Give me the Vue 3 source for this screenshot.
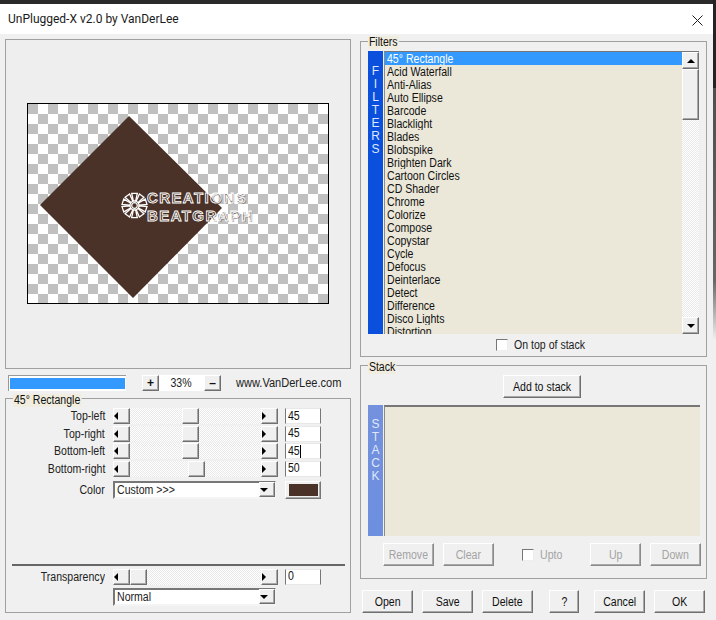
<script setup>
const filters = ['45° Rectangle','Acid Waterfall','Anti-Alias','Auto Ellipse','Barcode','Blacklight','Blades','Blobspike','Brighten Dark','Cartoon Circles','CD Shader','Chrome','Colorize','Compose','Copystar','Cycle','Defocus','Deinterlace','Detect','Difference','Disco Lights','Distortion']
const sliders = [
  { label: 'Top-left', thumb: 52, value: '45' },
  { label: 'Top-right', thumb: 52, value: '45' },
  { label: 'Bottom-left', thumb: 52, value: '45', caret: true },
  { label: 'Bottom-right', thumb: 58, value: '50' }
]
const petals = Array.from({ length: 10 }, (_, i) => i * 36)
</script>

<template>
  <div class="screen">
    <div class="topbar"></div>
    <div class="titlebar">
      <span class="title">UnPlugged-X v2.0 by VanDerLee</span>
      <svg class="close" width="11" height="11" viewBox="0 0 11 11"><path d="M.5.5l10 10M10.5.5l-10 10" stroke="#222" stroke-width="1" fill="none"/></svg>
    </div>
    <div class="body">
      <div class="left">
        <div class="preview">
          <div class="canvas">
            <svg class="shape" width="300" height="199" viewBox="28 104 300 199">
              <polygon points="129,116 222,208 133,298 40,205" fill="#4a3228"/>
            </svg>
            <div class="logo">
              <svg class="flower" width="27" height="27" viewBox="-13.5 -13.5 27 27">
                <g v-for="a in petals" :key="a" :transform="`rotate(${a})`">
                  <path d="M-1.2-4.5L-2.8-12.2L2.8-12.2L1.2-4.5Z" fill="none" stroke="#fff" stroke-width="1.3"/>
                </g>
                <circle r="2.8" fill="none" stroke="#fff" stroke-width="1.2"/>
              </svg>
              <div class="logo-text">
                <div class="logo-line">CREATIONS</div>
                <div class="logo-line">BEATGRAPH</div>
              </div>
            </div>
          </div>
        </div>
        <div class="zoom-row">
          <div class="progress"><div class="progress-fill"></div></div>
          <button class="btn zoom-btn">+</button>
          <span class="zoom-val"><span class="n">33%</span></span>
          <button class="btn zoom-btn">–</button>
          <span class="url">www.VanDerLee.com</span>
        </div>
        <div class="group params">
          <span class="legend">45° Rectangle</span>
          <div class="slider-rows">
            <div v-for="s in sliders" :key="s.label" class="row">
              <label class="row-label"><span class="n nr">{{ s.label }}</span></label>
              <div class="hscroll">
                <button class="btn arrow"><i class="tri tri-l"></i></button>
                <div class="track"><div class="btn thumb" :style="{ marginLeft: s.thumb + 'px' }"></div></div>
                <button class="btn arrow"><i class="tri tri-r"></i></button>
              </div>
              <div class="input"><span class="n nl">{{ s.value }}</span><i v-if="s.caret" class="caret"></i></div>
            </div>
          </div>
          <div class="row color-row">
            <label class="row-label"><span class="n nr">Color</span></label>
            <div class="select"><span class="n nl">Custom &gt;&gt;&gt;</span><button class="btn drop"><i class="tri tri-d"></i></button></div>
            <div class="swatch"><div class="swatch-fill"></div></div>
          </div>
          <div class="rule"></div>
          <div class="row trans-row">
            <label class="row-label"><span class="n nr">Transparency</span></label>
            <div class="hscroll">
              <button class="btn arrow"><i class="tri tri-l"></i></button>
              <div class="track"><div class="btn thumb"></div></div>
              <button class="btn arrow"><i class="tri tri-r"></i></button>
            </div>
            <div class="input"><span class="n nl">0</span></div>
          </div>
          <div class="row normal-row">
            <span class="row-label"></span>
            <div class="select"><span class="n nl">Normal</span><button class="btn drop"><i class="tri tri-d"></i></button></div>
          </div>
        </div>
      </div>

      <div class="right">
        <div class="group filters">
          <span class="legend legend-f">Filters</span>
          <div class="listwrap">
            <div class="side side-filters"><span v-for="c in 'FILTERS'" :key="c + 'f'">{{ c }}</span></div>
            <div class="list">
              <div v-for="(f, i) in filters" :key="f" class="item" :class="{ sel: i === 0 }"><span class="n nl">{{ f }}</span></div>
            </div>
            <div class="vscroll">
              <button class="btn vbtn"><i class="tri tri-u"></i></button>
              <div class="btn vthumb"></div>
              <div class="vtrack"></div>
              <button class="btn vbtn"><i class="tri tri-d"></i></button>
            </div>
          </div>
          <div class="ontop"><i class="check"></i><span class="n nl">On top of stack</span></div>
        </div>
        <div class="group stack">
          <span class="legend">Stack</span>
          <div class="add-row"><button class="btn add"><span class="n">Add to stack</span></button></div>
          <div class="stack-box">
            <div class="side side-stack"><span v-for="c in 'STACK'" :key="c + 's'">{{ c }}</span></div>
            <div class="stack-list"></div>
          </div>
          <div class="stack-actions">
            <button class="btn act off"><span class="n">Remove</span></button>
            <button class="btn act off gap"><span class="n">Clear</span></button>
            <div class="upto"><i class="check"></i><span class="n nl">Upto</span></div>
            <button class="btn act off"><span class="n">Up</span></button>
            <button class="btn act off gap"><span class="n">Down</span></button>
          </div>
        </div>
        <div class="footer">
          <button class="btn foot"><span class="n">Open</span></button>
          <button class="btn foot"><span class="n">Save</span></button>
          <button class="btn foot"><span class="n">Delete</span></button>
          <button class="btn foot help"><span class="n">?</span></button>
          <button class="btn foot"><span class="n">Cancel</span></button>
          <button class="btn foot"><span class="n">OK</span></button>
        </div>
      </div>
    </div>
    <div class="edge"></div>
  </div>
</template>

<style scoped>
.screen {
  position: relative;
  width: 716px;
  height: 620px;
  overflow: hidden;
  background: #f0f0f0;
  font-family: "Liberation Sans", Arial, sans-serif;
  font-size: 12px;
  color: #111;
  box-sizing: border-box;
}
.n { display: inline-block; transform: scaleX(0.88); white-space: nowrap; }
.nl { transform-origin: left center; }
.nr { transform-origin: right center; }
.topbar { height: 4px; background: #2a2a2a; }
.titlebar {
  height: 30px;
  background: #fff;
  display: flex;
  align-items: center;
  justify-content: space-between;
  padding: 0 13px 0 8px;
}
.title { font-family: Roboto, sans-serif; font-size: 12px; color: #1a1a1a; }
.close { margin-top: 2px; }
.edge {
  position: absolute;
  right: 0;
  top: 0;
  width: 3px;
  height: 340px;
  background: linear-gradient(#242424 0 88px, #4f4f4f 88px, #666 280px, #f0f0f0 340px);
}
.body { display: flex; padding: 5px 0 0 5px; gap: 9px; }
.left { width: 346px; }
.right { width: 347px; padding-top: 2px; }

.preview {
  width: 346px;
  height: 330px;
  box-sizing: border-box;
  border: 1px solid #a0a0a0;
  background: #eee;
  padding: 63px 0 0 21px;
}
.canvas {
  position: relative;
  width: 302px;
  height: 201px;
  box-sizing: border-box;
  border: 1px solid #000;
  background: repeating-conic-gradient(#c0c0c0 0 25%, #fff 0 50%) 10px 0 / 20px 20px;
}
.shape { display: block; }
.logo { position: absolute; left: 93px; top: 85px; display: flex; align-items: center; }
.flower { display: block; margin-top: -3px; }
.logo-text {
  margin-left: -1px;
  font-size: 15px;
  letter-spacing: 1.4px;
  font-weight: 700;
  color: transparent;
  -webkit-text-stroke: 0.9px #fff;
  text-shadow: 1px 1px 0 rgba(60, 40, 30, 0.55);
  white-space: nowrap;
}
.logo-line { height: 17.5px; line-height: 17.5px; }
.zoom-row { display: flex; align-items: center; height: 16px; margin: 6px 0 0 3px; }
.progress { width: 118px; height: 16px; box-sizing: border-box; background: #fff; padding: 2px 1px; border-left: 1px solid #999; border-top: 1px solid #999; }
.progress-fill { height: 100%; background: #3399ff; }
.zoom-btn { width: 17px; height: 16px; font-size: 13px; font-weight: 700; line-height: 13px; }
.progress + .zoom-btn { margin-left: 16px; }
.zoom-val { width: 45px; height: 16px; line-height: 16px; background: #fff; text-align: center; color: #222; }
.url { margin-left: 15px; color: #222; white-space: nowrap; display: inline-block; transform: scaleX(0.92); transform-origin: left center; }

.group { position: relative; border: 1px solid #a0a0a0; box-sizing: border-box; }
.legend {
  position: absolute;
  left: 7px;
  top: -5px;
  height: 13px;
  line-height: 13px;
  background: #f1eee0;
  padding: 0 1px;
  transform: scaleX(0.88);
  transform-origin: left center;
}
.legend-f { top: -6px; }
.params { width: 346px; height: 215px; margin-top: 7px; padding-top: 9px; }
.row { display: flex; align-items: center; }
.row-label { width: 99px; text-align: right; margin-right: 8px; color: #222; }
.slider-rows { display: flex; flex-direction: column; gap: 1.5px; }
.slider-rows .row { height: 16px; }
.hscroll { display: flex; width: 165px; height: 16px; }
.arrow { width: 17px; height: 16px; display: flex; align-items: center; justify-content: center; flex: none; }
.track { flex: 1; background: repeating-conic-gradient(#e9e9e9 0 25%, #fff 0 50%) 0 0 / 2px 2px; }
.thumb { width: 17px; height: 16px; }
.input {
  width: 36px;
  height: 16px;
  margin-left: 7px;
  line-height: 15px;
  box-sizing: border-box;
  background: #fff;
  border: 1px solid;
  border-color: #e8e8e8 #777 #e8e8e8 #777;
  padding-left: 2px;
  display: flex;
  align-items: center;
}
.caret { width: 1px; height: 13px; background: #000; margin-left: -1px; }
.color-row { margin-top: 4px; }
.select {
  display: flex;
  justify-content: space-between;
  align-items: center;
  width: 163px;
  height: 18px;
  box-sizing: border-box;
  background: #fff;
  border: 2px solid;
  border-color: #777 #f4f4f4 #f4f4f4 #777;
  padding-left: 2px;
}
.select > span { color: #222; }
.drop { width: 16px; height: 15px; display: flex; align-items: center; justify-content: center; margin-right: -1px; }
.swatch {
  width: 36px;
  height: 18px;
  margin-left: 9px;
  box-sizing: border-box;
  padding: 2px 2px 2px 3px;
  border: 1px solid;
  border-color: #fff #777 #777 #fff;
  box-shadow: inset -1px -1px 0 #aaa;
}
.swatch-fill { height: 100%; background: #4a3228; }
.rule { height: 2px; background: #666; margin: 65px 0 0 6px; width: 333px; }
.trans-row { margin-top: 3px; }
.normal-row { margin-top: 3px; }

.btn {
  display: block;
  box-sizing: border-box;
  border: 1px solid;
  border-color: #fff #6f6f6f #6f6f6f #fff;
  box-shadow: inset -1px -1px 0 #a8a8a8;
  background: #f0f0f0;
  font-family: "Liberation Sans", Arial, sans-serif;
  font-size: 12px;
  color: #111;
  padding: 0;
}
.tri { display: block; width: 0; height: 0; border-style: solid; border-color: transparent; }
.tri-l { border-width: 4px 4px 4px 0; border-right-color: #000; }
.tri-r { border-width: 4px 0 4px 4px; border-left-color: #000; }
.tri-u { border-width: 0 4px 4px 4px; border-bottom-color: #000; }
.tri-d { border-width: 4px 4px 0 4px; border-top-color: #000; }

.filters { width: 347px; height: 316px; padding: 9px 0 0 7px; }
.listwrap { display: flex; height: 283px; }
.side {
  width: 15px;
  flex: none;
  display: flex;
  flex-direction: column;
  align-items: center;
  color: #dfe7fb;
  font-size: 12px;
  line-height: 13px;
}
.side-filters { background: #0a50dc; padding-top: 14px; }
.list {
  width: 298px;
  margin-left: 1px;
  background: #ebe8da;
  border-top: 1px solid #777;
  border-left: 1px solid #8a8a8a;
  overflow: hidden;
  box-sizing: border-box;
}
.item { height: 13px; line-height: 15px; padding-left: 2px; white-space: nowrap; color: #111; overflow: hidden; }
.item.sel { background: #3399ff; color: #fff; }
.vscroll { width: 17px; display: flex; flex-direction: column; border-top: 1px solid #777; box-sizing: border-box; }
.vbtn { width: 17px; height: 17px; display: flex; align-items: center; justify-content: center; flex: none; }
.vthumb { height: 51px; flex: none; }
.vtrack { flex: 1; background: repeating-conic-gradient(#e9e9e9 0 25%, #fff 0 50%) 0 0 / 2px 2px; }
.ontop { display: flex; align-items: center; gap: 6px; margin: 4px 0 0 128px; height: 13px; color: #222; }
.check {
  display: block;
  flex: none;
  width: 12px;
  height: 12px;
  box-sizing: border-box;
  background: #fff;
  border: 1px solid;
  border-color: #777 #eee #eee #777;
}
.stack { width: 347px; height: 214px; margin-top: 8px; padding: 9px 0 0 7px; }
.add-row { display: flex; margin-left: 135px; }
.add { width: 78px; height: 23px; }
.stack-box { display: flex; height: 131px; margin-top: 7px; }
.side-stack { background: linear-gradient(#7391dd, #6d8fe0); padding-top: 13px; }
.stack-list { width: 316px; margin-left: 1px; background: #ebe8da; border-top: 2px solid #777; border-left: 1px solid #8a8a8a; box-sizing: border-box; }
.stack-actions { display: flex; align-items: center; margin: 7px 0 0 15px; }
.act { width: 51px; height: 23px; flex: none; }
.off { color: #a3a3a3; border-color: #fff #8a8a8a #8a8a8a #fff; }
.gap { margin-left: 9px; }
.upto { display: flex; align-items: center; gap: 6px; width: 68px; flex: none; margin-left: 28px; color: #a3a3a3; }
.footer { display: flex; margin: 11px 0 0 2px; gap: 9px; }
.foot { width: 51px; height: 23px; font-size: 12px; flex: none; }
.help { width: 30px; margin: 0 6px 0 7px; }
</style>
